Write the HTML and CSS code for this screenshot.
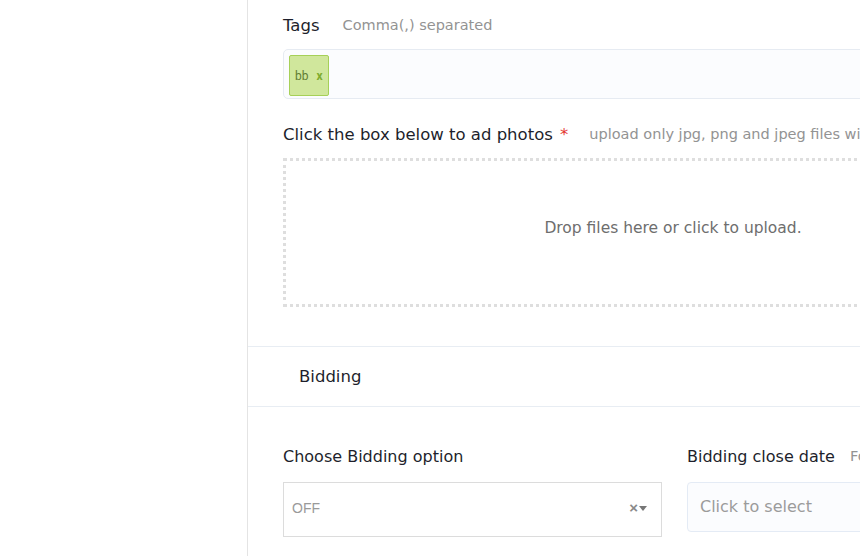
FILE: index.html
```
<!DOCTYPE html>
<html lang="en">
<head>
<meta charset="utf-8">
<title>Ad form</title>
<link rel="stylesheet" href="styles.css">
</head>
<body>
<div class="layout">
  <aside class="sidebar"></aside>
  <main class="main">
    <section class="section details">
      <div class="field">
        <div class="label-row"><span class="label">Tags</span><span class="hint hint-tags">Comma(,) separated</span></div>
        <div class="tags-input"><span class="chip"><span class="chip-text">bb</span><span class="chip-x">x</span></span></div>
      </div>
      <div class="field">
        <div class="label-row"><span class="label">Click the box below to ad photos <span class="req">*</span></span><span class="hint">upload only jpg, png and jpeg files with maximum size</span></div>
        <div class="dropzone">Drop files here or click to upload.</div>
      </div>
    </section>
    <div class="card-header">Bidding</div>
    <section class="section bidding">
      <div class="grid">
        <div class="field">
          <div class="label-row"><span class="label small">Choose Bidding option</span></div>
          <div class="select"><span class="select-value">OFF</span><span class="select-icons"><span class="clear">×</span><span class="caret"></span></span></div>
        </div>
        <div class="field">
          <div class="label-row"><span class="label small">Bidding close date</span><span class="hint">Format: YYYY-MM-DD</span></div>
          <div class="date-input">Click to select</div>
        </div>
      </div>
    </section>
  </main>
</div>
</body>
</html>
```
FILE: styles.css
```
* { box-sizing: border-box; }
html, body { margin: 0; padding: 0; background: #ffffff; }
body {
  font-family: "DejaVu Sans", "Open Sans", sans-serif;
  color: #1e1f2c;
  width: 860px;
  height: 556px;
  overflow: hidden;
}
.layout { display: flex; height: 556px; }
.sidebar { width: 248px; flex: none; border-right: 1px solid #e4e4e4; }
.main { flex: none; width: 1110px; }
.section { padding: 0 35px; }
.details { padding-top: 13px; padding-bottom: 39px; }
.field + .field { margin-top: 23px; }
.label-row { display: flex; align-items: center; height: 24px; white-space: nowrap; margin-bottom: 12px; }
.label { font-size: 16.5px; }
.label.small { font-size: 16px; }
.req { color: #e3342f; margin-left: 2px; }
.hint { font-size: 14.5px; color: #939393; margin-left: 21px; }
.hint-tags { margin-left: 23px; }
.tags-input {
  width: 780px; height: 50px;
  background: #fbfcfe; border: 1px solid #e6ebf2; border-radius: 5px;
  padding: 5px; display: flex; align-items: flex-start;
}
.chip {
  display: flex; align-items: center; gap: 8px;
  height: 41px; padding: 0 5px;
  background: #d0e79c; border: 1px solid #a6d058; border-radius: 2px;
  font-family: "Roboto", sans-serif; font-size: 12px;
}
.chip-text { color: #5f7d33; }
.chip-x { color: #7fac2e; font-weight: 700; }
.dropzone {
  width: 780px; height: 149px;
  border: 3px dotted #dedede;
  display: flex; align-items: center; justify-content: center;
  font-size: 15.5px; color: #6e6e6e;
  padding-bottom: 9px;
}
.card-header {
  height: 61px; border-top: 1px solid #e8edf3; border-bottom: 1px solid #e8edf3;
  display: flex; align-items: center; padding-left: 51px; font-size: 16.5px;
}
.bidding { padding-top: 37px; }
.grid { display: grid; grid-template-columns: 379px 379px; column-gap: 25px; }
.bidding .label-row { margin-bottom: 14px; }
.bidding .field + .field { margin-top: 0; }
.bidding .hint { margin-left: 15px; }
.select {
  height: 55px; border: 1px solid #dcdcdc; background: #fff;
  display: flex; align-items: center; justify-content: space-between;
  padding: 0 14px 4px 8px;
}
.select-value { font-family: "Liberation Sans", Arial, sans-serif; font-size: 14px; color: #9a9a9a; }
.select-icons { display: flex; align-items: center; }
.clear { font-family: "Liberation Sans", Arial, sans-serif; font-size: 15px; font-weight: 700; color: #8a8a8a; line-height: 1; }
.caret { width: 0; height: 0; border-left: 4px solid transparent; border-right: 4px solid transparent; border-top: 5px solid #777; margin-left: 1px; margin-top: 2px; }
.date-input {
  height: 50px; background: #fbfcfe; border: 1px solid #e4ebf5; border-radius: 4px;
  display: flex; align-items: center; padding-left: 12px; padding-bottom: 2px;
  font-size: 16px; color: #9b9b9b;
}
```
